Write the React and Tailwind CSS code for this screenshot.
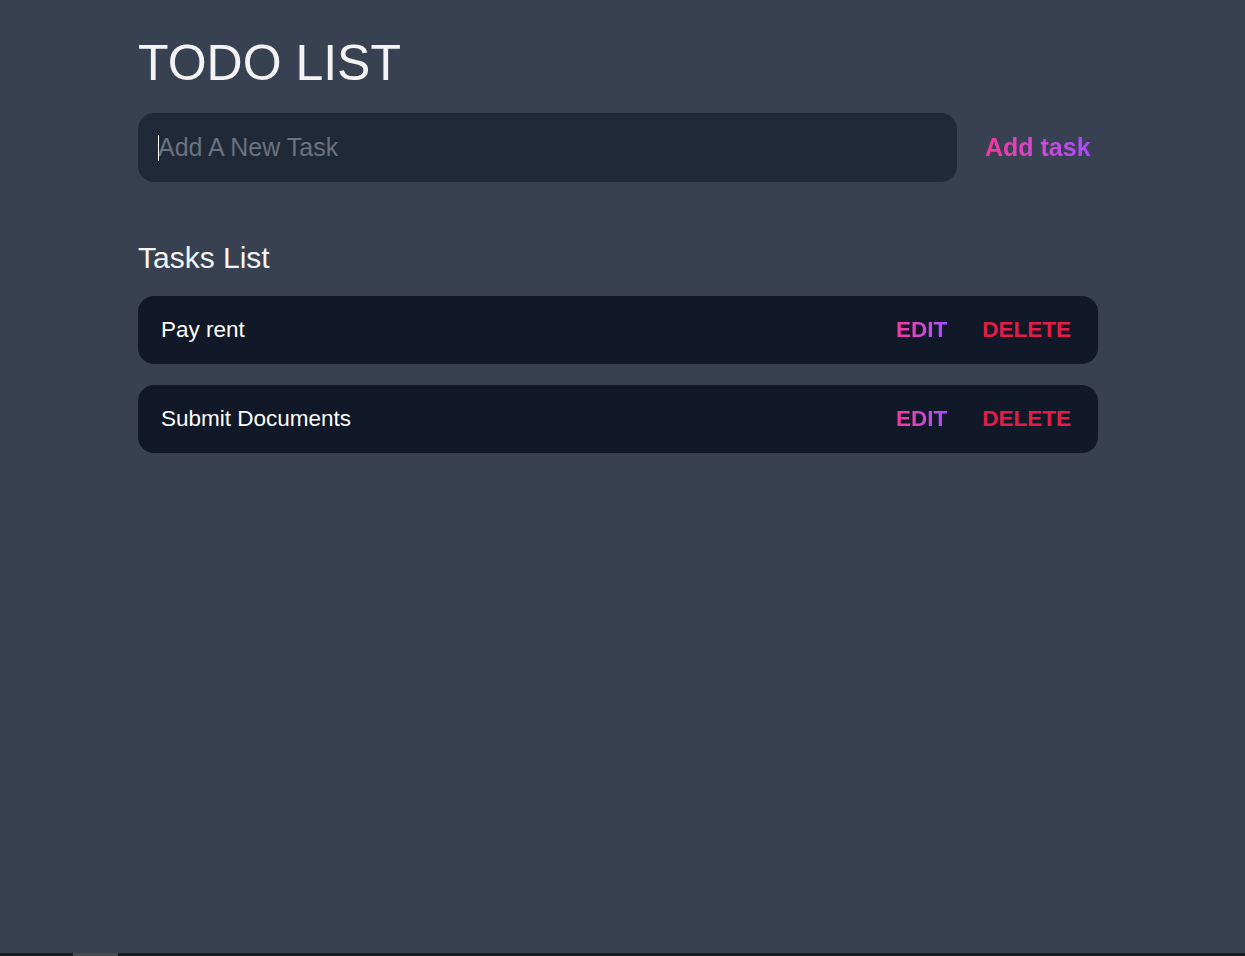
import { useState } from "react";

const initialTasks = [
  { id: 1, text: "Pay rent" },
  { id: 2, text: "Submit Documents" }
];

export default function App() {
  const [tasks, setTasks] = useState(initialTasks);
  const [value, setValue] = useState("");

  function addTask() {
    if (!value.trim()) return;
    setTasks([...tasks, { id: Date.now(), text: value.trim() }]);
    setValue("");
  }

  function removeTask(id) {
    setTasks(tasks.filter((task) => task.id !== id));
  }

  return (
    <div className="flex h-[956px] flex-col bg-[#374151] font-['Liberation_Sans',Arial,sans-serif] text-gray-100">
      <div className="flex-1 overflow-hidden">
        <div className="ml-[138px] w-[960px] pt-[33px]">
          <h1 className="text-[50px] leading-[60px] font-normal text-[#f3f3f3]">TODO LIST</h1>

          <div className="mt-[20px] flex items-center">
            <div className="relative">
              <input
                value={value}
                onChange={(e) => setValue(e.target.value)}
                placeholder="Add A New Task"
                className="h-[69px] w-[819px] rounded-2xl bg-[#1f2937] px-5 text-[25px] text-gray-100 caret-white outline-none placeholder:text-[#6b7280]"
              />
              {/* caret shown in the screenshot */}
              {!value ? <span className="pointer-events-none absolute left-5 top-[22px] h-[26px] w-px bg-white" /> : null}
            </div>
            <button
              type="button"
              onClick={addTask}
              className="ml-[28px] bg-gradient-to-r from-pink-500 to-purple-500 bg-clip-text text-[25px] font-bold text-transparent"
            >
              Add task
            </button>
          </div>

          <h2 className="mt-[56px] text-[30px] leading-[40px] text-gray-100">Tasks List</h2>

          <div className="mt-[18px] flex flex-col gap-[21px]">
            {tasks.map((task) => (
              <div key={task.id} className="flex h-[68px] items-center rounded-2xl bg-[#111827] pl-[23px] pr-[27px]">
                <p className="flex-1 text-[22.5px] text-white">{task.text}</p>
                <button type="button" className="bg-gradient-to-r from-pink-500 to-purple-500 bg-clip-text text-[22.5px] font-semibold text-transparent">
                  EDIT
                </button>
                <button type="button" onClick={() => removeTask(task.id)} className="ml-[35px] text-[22.5px] font-semibold text-[#e11d48]">
                  DELETE
                </button>
              </div>
            ))}
          </div>
        </div>
      </div>
      <div className="h-[3px] bg-[#1c1c1c]">
        <div className="ml-[73px] h-full w-[45px] bg-[#4b4b4b]" />
      </div>
    </div>
  );
}
